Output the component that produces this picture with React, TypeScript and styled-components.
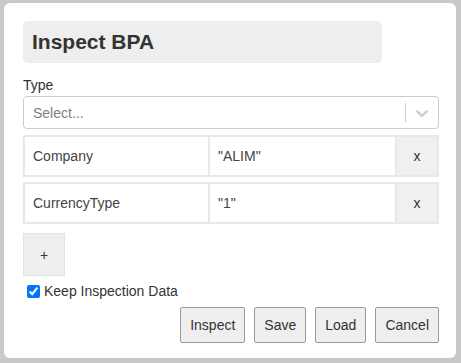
import React from "react";
import styled, { createGlobalStyle } from "styled-components";

const Global = createGlobalStyle`
  html, body { margin: 0; padding: 0; }
  body {
    width: 461px;
    height: 363px;
    overflow: hidden;
    font-family: "Liberation Sans", Arial, sans-serif;
    background: #c9c9c9;
  }
  * { box-sizing: border-box; }
`;

const Backdrop = styled.div`
  width: 461px;
  height: 363px;
  padding: 3px 5px 5px 4px;
  background: #c9c9c9;
`;

const Modal = styled.div`
  width: 452px;
  height: 355px;
  background: #fff;
  border-radius: 6px;
  padding: 18px 17px 15px 19px;
  display: flex;
  flex-direction: column;
`;

const TitleBox = styled.div`
  width: 359px;
  height: 42px;
  background: #eeeeee;
  border-radius: 5px;
  display: flex;
  align-items: center;
  padding-left: 9px;
  font-size: 21px;
  font-weight: 700;
  color: #333;
`;

const Label = styled.div`
  margin-top: 14px;
  font-size: 14px;
  line-height: 16px;
  color: #333;
`;

const SelectBox = styled.div`
  margin-top: 3px;
  height: 33px;
  border: 1px solid #cccccc;
  border-radius: 4px;
  display: flex;
  align-items: center;
`;

const Placeholder = styled.div`
  flex: 1;
  padding-left: 9px;
  font-size: 14px;
  color: #808080;
`;

const Separator = styled.div`
  width: 1px;
  align-self: stretch;
  margin: 6px 0;
  background: #cccccc;
`;

const Indicator = styled.div`
  padding: 0 6px 0 6px;
  display: flex;
  align-items: center;
  color: #cccccc;
`;

const Row = styled.div<{ $first?: boolean }>`
  margin-top: ${(p) => (p.$first ? 6 : 5)}px;
  height: 42px;
  display: grid;
  grid-template-columns: 1fr 1fr 42px;
`;

const Cell = styled.div<{ $joined?: boolean }>`
  border: 2px solid #e8e8e8;
  ${(p) => (p.$joined ? "border-left: none;" : "")}
  display: flex;
  align-items: center;
  padding-left: 8px;
  font-size: 14px;
  color: #444;
  background: #fff;
`;

const RemoveButton = styled.div`
  border: 2px solid #e8e8e8;
  border-left: none;
  background: #f0f0f0;
  display: flex;
  align-items: center;
  justify-content: center;
  font-size: 14px;
  color: #333;
`;

const AddButton = styled.div`
  margin-top: 9px;
  width: 42px;
  height: 43px;
  background: #efefef;
  border: 1px solid #e2e2e2;
  display: flex;
  align-items: center;
  justify-content: center;
  font-size: 14px;
  color: #333;
`;

const CheckRow = styled.label`
  margin-top: 7px;
  padding-left: 4px;
  display: flex;
  align-items: center;
  font-size: 14px;
  line-height: 16px;
  color: #333;
`;

const Check = styled.input`
  width: 13px;
  height: 13px;
  margin: 0 4px 0 0;
  accent-color: #0075ff;
`;

const Footer = styled.div`
  margin-top: 8px;
  display: flex;
  justify-content: flex-end;
  gap: 9px;
`;

const Button = styled.button`
  height: 36px;
  padding: 0 9px;
  border: 1px solid #9a9a9a;
  border-radius: 2px;
  background: #efefef;
  font-family: "Liberation Sans", Arial, sans-serif;
  font-size: 14px;
  color: #333;
`;

const rows = [
  { key: "Company", value: '"ALIM"' },
  { key: "CurrencyType", value: '"1"' },
];

export default function App() {
  return (
    <>
      <Global />
      <Backdrop>
        <Modal>
          <TitleBox>Inspect BPA</TitleBox>
          <Label>Type</Label>
          <SelectBox>
            <Placeholder>Select...</Placeholder>
            <Separator />
            <Indicator>
              <svg width="20" height="20" viewBox="0 0 20 20" fill="currentColor">
                <path d="M4.516 7.548c0.436-0.446 1.043-0.481 1.576 0l3.908 3.747 3.908-3.747c0.533-0.481 1.141-0.446 1.574 0 0.436 0.445 0.408 1.197 0 1.615-0.406 0.418-4.695 4.502-4.695 4.502-0.217 0.223-0.502 0.335-0.787 0.335s-0.57-0.112-0.789-0.335c0 0-4.287-4.084-4.695-4.502s-0.436-1.17 0-1.615z" />
              </svg>
            </Indicator>
          </SelectBox>
          {rows.map((r, i) => (
            <Row key={r.key} $first={i === 0}>
              <Cell>{r.key}</Cell>
              <Cell $joined>{r.value}</Cell>
              <RemoveButton>x</RemoveButton>
            </Row>
          ))}
          <AddButton>+</AddButton>
          <CheckRow>
            <Check type="checkbox" defaultChecked />
            Keep Inspection Data
          </CheckRow>
          <Footer>
            <Button>Inspect</Button>
            <Button>Save</Button>
            <Button>Load</Button>
            <Button>Cancel</Button>
          </Footer>
        </Modal>
      </Backdrop>
    </>
  );
}
